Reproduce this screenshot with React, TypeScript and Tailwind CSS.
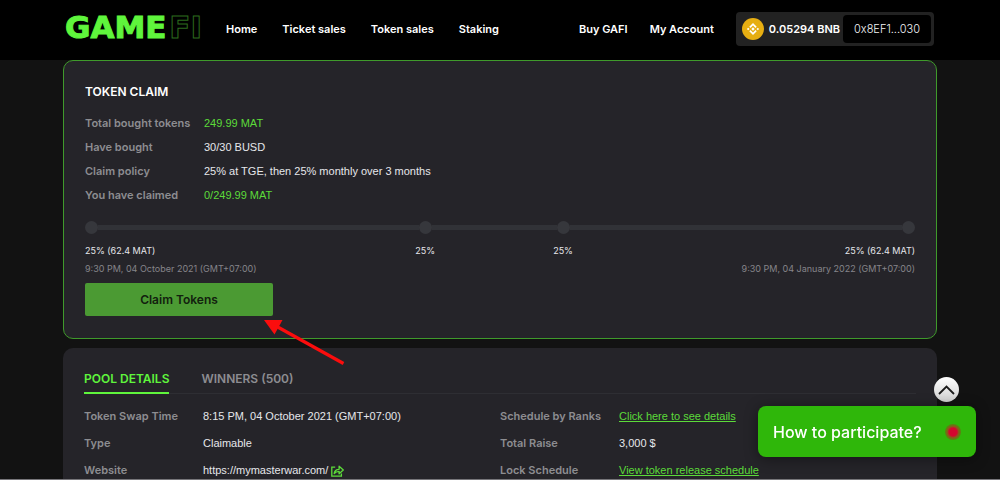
import React, { useState } from 'react';

const claimRows = [
  { label: 'Total bought tokens', value: '249.99 MAT', highlight: true },
  { label: 'Have bought', value: '30/30 BUSD' },
  { label: 'Claim policy', value: '25% at TGE, then 25% monthly over 3 months' },
  { label: 'You have claimed', value: '0/249.99 MAT', highlight: true },
];

const BnbIcon = () => (
  <svg viewBox="0 0 22 22" className="size-[22px] shrink-0" aria-hidden="true">
    <circle cx="11" cy="11" r="11" fill="#e6ae12" />
    <g fill="none" stroke="#fff" strokeWidth="1.8">
      <path d="M7.9 9.3 11 6.2l3.1 3.1M7.9 12.7 11 15.8l3.1-3.1" />
    </g>
    <g fill="#fff">
      <path d="m11 9.3 1.7 1.7-1.7 1.7L9.3 11z" />
      <path d="m6.2 9.7 1.3 1.3-1.3 1.3L4.900 11zM15.8 9.7 17.100 11l-1.3 1.3-1.3-1.3z" />
    </g>
  </svg>
);

const ShareIcon = () => (
  <svg viewBox="0 0 13 12" className="w-[13px] h-3" fill="none" stroke="#5cdb3a" strokeWidth="1.3" aria-hidden="true">
    <path d="M4.2 2.2H.8v9h9.6V8.4" />
    <path d="M3.2 8.6c.3-2.8 2-4.2 4.9-4.3V1.2l4.2 3.9-4.2 3.7V6.3C6 6.3 4.4 7 3.2 8.6Z" strokeLinejoin="round" />
  </svg>
);

const Header = () => (
  <header className="h-[60px] pb-0.5 pl-[65px] pr-[66px] bg-black flex items-center text-[11px] font-semibold text-white">
    <a href="#" aria-label="GameFi" className="w-[137px] mr-6 pb-1 flex justify-between shrink-0 font-['DejaVu_Sans',sans-serif] font-bold text-[31px] leading-8 text-[#5ff53c]">
      <span className="[-webkit-text-stroke:1px_#5ff53c]">GAME</span>
      <span className="text-transparent [-webkit-text-stroke:1px_#2c6b1e]">FI</span>
    </a>
    <nav className="flex gap-[25px]">
      <a href="#">Home</a>
      <a href="#">Ticket sales</a>
      <a href="#">Token sales</a>
      <a href="#">Staking</a>
    </nav>
    <nav className="flex gap-[22px] ml-auto">
      <a href="#">Buy GAFI</a>
      <a href="#">My Account</a>
    </nav>
    <div className="ml-[22px] h-[34px] pl-1.5 pr-[3px] bg-[#222] rounded flex items-center">
      <BnbIcon />
      <span className="ml-[5px] mr-[3px]">0.05294 BNB</span>
      <button className="h-7 px-[11px] bg-black rounded font-light text-gray-100">0x8EF1...030</button>
    </div>
  </header>
);

const Dot = () => <span className="size-[13px] rounded-full bg-[#36373c] shrink-0" />;

const Timeline = () => (
  <div className="mt-3.5 text-[9px] leading-[18px] text-gray-200">
    <div className="flex items-center">
      <Dot />
      <span className="h-[5px] grow-[321] bg-[#313237]" />
      <Dot />
      <span className="h-[5px] grow-[125] bg-[#313237]" />
      <Dot />
      <span className="h-[5px] grow-[332] bg-[#313237]" />
      <Dot />
    </div>
    <div className="mt-2 flex">
      <span>25% (62.4 MAT)</span>
      <span className="grow-[264]" />
      <span>25%</span>
      <span className="grow-[120]" />
      <span>25%</span>
      <span className="grow-[276]" />
      <span>25% (62.4 MAT)</span>
    </div>
    <div className="flex justify-between text-[#858589]">
      <span>9:30 PM, 04 October 2021 (GMT+07:00)</span>
      <span>9:30 PM, 04 January 2022 (GMT+07:00)</span>
    </div>
  </div>
);

const TokenClaim = () => (
  <section className="border border-[#3f9a2b] rounded-[10px] bg-[#252429] px-[21px] py-[22px]">
    <h2 className="text-xs leading-[18px] font-semibold text-white">TOKEN CLAIM</h2>
    <dl className="mt-2.5">
      {claimRows.map(row => (
        <div key={row.label} className="h-6 flex items-center text-[11px]">
          <dt className="w-[119px] font-semibold text-[#8d8d91]">{row.label}</dt>
          <dd className={`font-['Liberation_Sans',sans-serif] ${row.highlight ? 'text-[#5cdb3a]' : 'text-gray-200'}`}>{row.value}</dd>
        </div>
      ))}
    </dl>
    <Timeline />
    <button className="mt-[5px] w-[188px] h-[33px] rounded-xs bg-[#4b9a33] text-xs font-semibold text-[#12210e]">Claim Tokens</button>
  </section>
);

const Detail = ({ label, children }: { label: string; children: React.ReactNode }) => (
  <div className="h-[27px] flex items-center text-[11px]">
    <dt className="w-[119px] font-semibold text-[#8d8d91]">{label}</dt>
    <dd className="flex items-center gap-[3px] font-['Liberation_Sans',sans-serif] text-gray-200">{children}</dd>
  </div>
);

const PoolDetails = () => {
  const [tab, setTab] = useState('details');
  const tabClass = (name: string) =>
    `pb-1 -mb-px border-b-2 ${tab === name ? 'border-[#5ff53c] text-[#5ff53c]' : 'border-transparent text-[#8d8d91]'}`;

  return (
    <section className="mt-[9px] rounded-[10px] bg-[#252429] px-[21px] pt-[22px] pb-6">
      <div className="flex gap-8 border-b border-[#2e2e33] text-xs leading-[18px] font-semibold">
        <button className={tabClass('details')} onClick={() => setTab('details')}>POOL DETAILS</button>
        <button className={tabClass('winners')} onClick={() => setTab('winners')}>WINNERS (500)</button>
      </div>
      <dl className="mt-[9px] grid grid-cols-2">
        <Detail label="Token Swap Time">8:15 PM, 04 October 2021 (GMT+07:00)</Detail>
        <Detail label="Schedule by Ranks"><a href="#" className="underline text-[#5cdb3a]">Click here to see details</a></Detail>
        <Detail label="Type">Claimable</Detail>
        <Detail label="Total Raise">3,000 $</Detail>
        <Detail label="Website"><a href="#" className="flex items-center gap-[3px]">https://mymasterwar.com/ <ShareIcon /></a></Detail>
        <Detail label="Lock Schedule"><a href="#" className="underline text-[#5cdb3a]">View token release schedule</a></Detail>
      </dl>
    </section>
  );
};

export default function App() {
  return (
    <div className="h-screen overflow-hidden bg-[#121212] border-b border-[#77767a] font-['Inter',sans-serif]">
      <Header />
      <main className="relative px-[63px]">
        <TokenClaim />
        <PoolDetails />
        {/* Pointer to the claim button */}
        <svg viewBox="0 0 82 46" className="absolute left-[263px] top-[259px] w-[82px] h-[46px]" aria-hidden="true">
          <path d="M80.5 44.5 12 6.500" stroke="#fb0d0d" strokeWidth="3.2" />
          <path d="M1 1h18.500l-8 14.500z" fill="#fb0d0d" />
        </svg>
      </main>

      <button aria-label="Back to top" className="fixed right-[41px] bottom-[78px] size-[25px] rounded-full bg-linear-to-b from-white to-[#cfcfcf] flex items-center justify-center">
        <svg viewBox="0 0 17 10" className="w-[17px] h-2.5" fill="none" stroke="#1a1a1a" strokeWidth="1.8">
          <path d="m1 9 7.5-7.5L16 9" />
        </svg>
      </button>
      <button className="fixed right-6 bottom-[23px] w-[218px] h-[51px] px-[15px] rounded-lg bg-[#2fb70a] shadow-[0_2px_14px_rgba(0,0,0,0.4)] flex items-center justify-between text-base font-medium text-white">
        How to participate?
        <span className="size-4 rounded-full bg-[radial-gradient(circle,#d4062f_35%,#8a5a1a_50%,#55860f_70%)]" />
      </button>
    </div>
  );
}
